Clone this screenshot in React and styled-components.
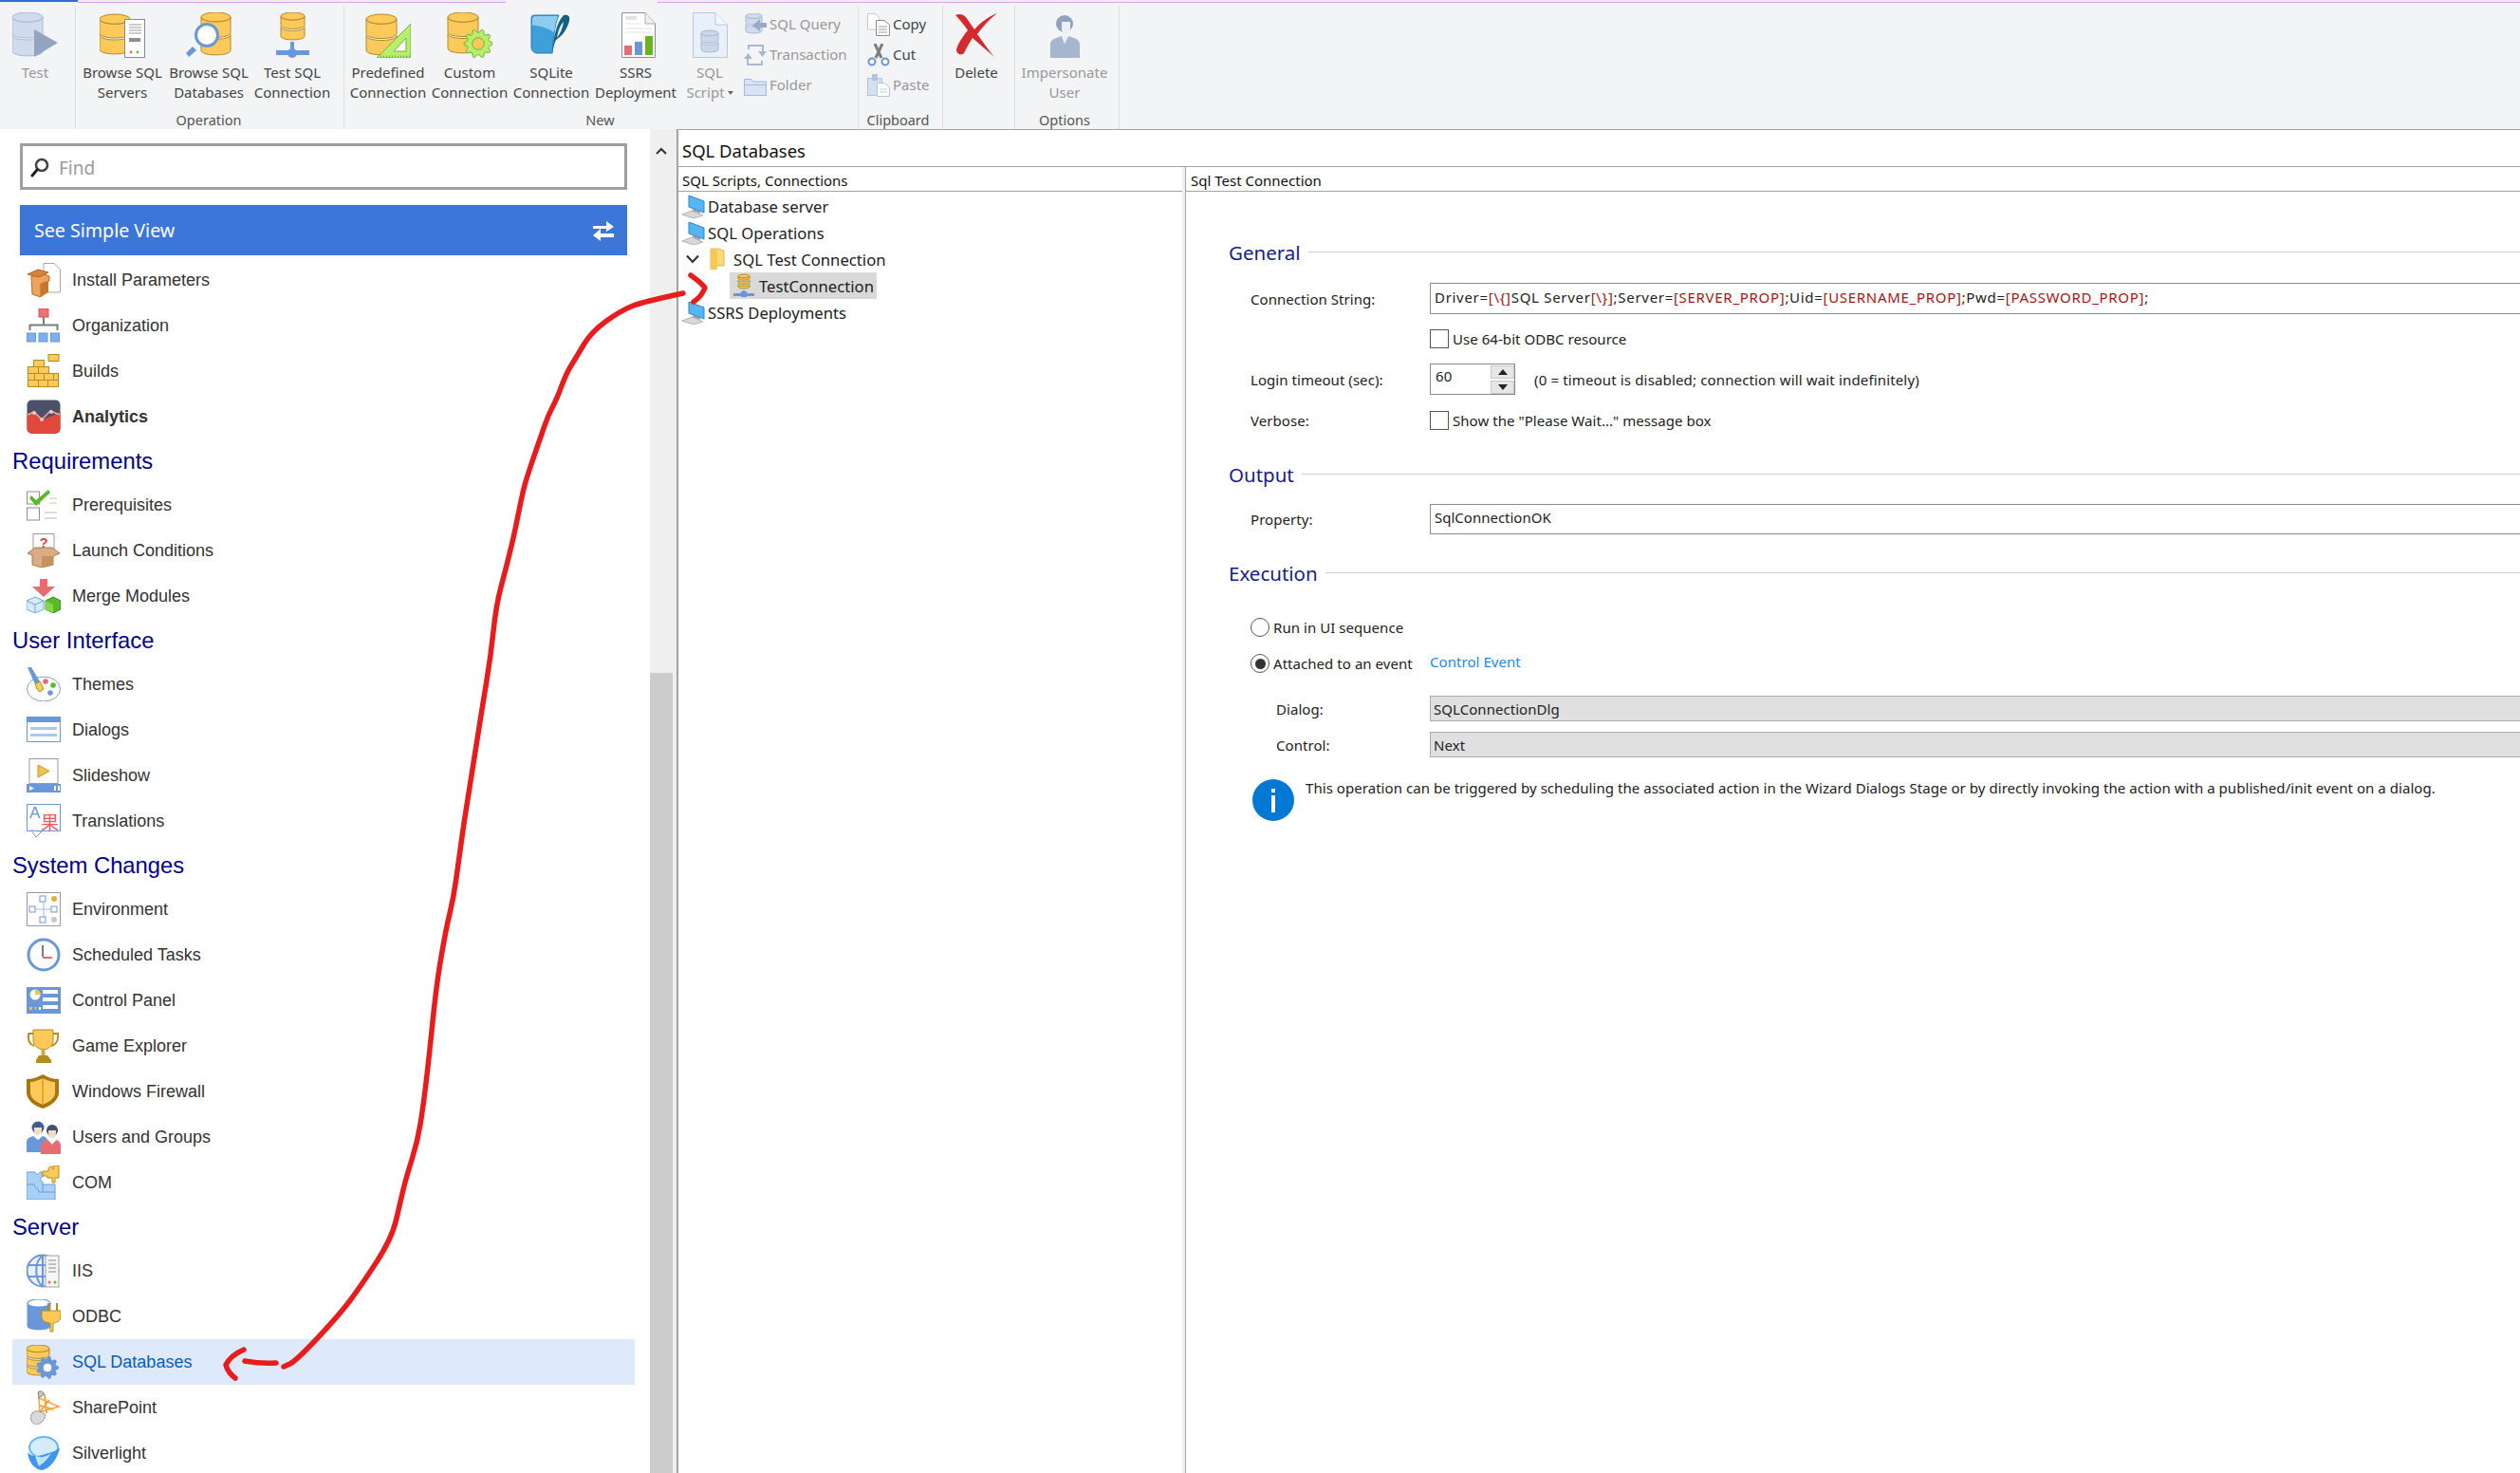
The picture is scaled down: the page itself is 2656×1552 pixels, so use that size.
import React from "react";
import styled, { createGlobalStyle } from "styled-components";

const UI_FONT = `"Noto Sans", "Open Sans", sans-serif`;
const NAV_FONT = `"Liberation Sans", Arial, sans-serif`;

const GOLD = "#fdc958";
const GOLD_LINE = "#b08a2c";
const PALE = "#d0dcee";
const PALE_LINE = "#a8b8d4";
const BLUE = "#6a97d8";

/* ------------------------------ drawing helpers ----------------------------- */

// two or three stacked drums, the database shape used all over the app
const Db = ({ x = 0, y = 0, w = 32, h = 44, fill = GOLD, line = GOLD_LINE, tiers = 2 }) => {
  const ry = w * 0.16;
  const step = (h - ry * 2) / tiers;
  const parts = [];
  for (let i = tiers - 1; i >= 0; i--) {
    const top = y + ry + i * step;
    parts.push(
      <path
        key={i}
        d={`M${x} ${top}v${step - 2}c0 ${ry * 1.3} ${w} ${ry * 1.3} ${w} 0v${-(step - 2)}c0 ${ry * 1.3} ${-w} ${ry * 1.3} ${-w} 0z`}
        fill={fill}
        stroke={line}
        strokeWidth="1"
      />
    );
  }
  return (
    <g>
      {parts}
      <ellipse cx={x + w / 2} cy={y + ry} rx={w / 2} ry={ry} fill={fill} stroke={line} strokeWidth="1" />
    </g>
  );
};

const gearPath = (cx, cy, r, teeth) => {
  const pts = [];
  const n = teeth * 4;
  for (let i = 0; i < n; i++) {
    const a = ((i - 0.5) / n) * Math.PI * 2;
    const rad = i % 4 < 2 ? r : r * 0.78;
    pts.push(`${(cx + Math.cos(a) * rad).toFixed(2)} ${(cy + Math.sin(a) * rad).toFixed(2)}`);
  }
  return `M${pts.join("L")}z`;
};

const Gear = ({ cx, cy, r, teeth = 9, fill, line, hole = "#fff" }) => (
  <g>
    <path d={gearPath(cx, cy, r, teeth)} fill={fill} stroke={line} strokeWidth="1" strokeLinejoin="round" />
    <circle cx={cx} cy={cy} r={r * 0.42} fill={hole} stroke={line} strokeWidth="1" />
  </g>
);

const smooth = (pts) => {
  let d = `M${pts[0][0]} ${pts[0][1]}`;
  for (let i = 1; i < pts.length - 1; i++) {
    const mx = (pts[i][0] + pts[i + 1][0]) / 2;
    const my = (pts[i][1] + pts[i + 1][1]) / 2;
    d += `Q${pts[i][0]} ${pts[i][1]} ${mx} ${my}`;
  }
  const last = pts[pts.length - 1];
  return `${d}L${last[0]} ${last[1]}`;
};

const Svg = ({ size = 36, children }) => (
  <svg width={size} height={size} viewBox={`0 0 ${size} ${size}`}>
    {children}
  </svg>
);

/* ------------------------------ ribbon icons ------------------------------ */

const ribbonIcons = {
  test: (
    <Svg size={48}>
      <Db w={32} h={48} fill={PALE} line={PALE_LINE} />
      <path d="M23 18L48 32 23 47z" fill="#93a4c1" />
    </Svg>
  ),
  servers: (
    <Svg size={48}>
      <Db y={2} w={32} h={44} />
      <rect x="26.5" y="7.5" width="21" height="40" fill="#fff" stroke="#8a8a8a" />
      <path d="M31 13h13M31 16h13M31 19h13M31 22h13" stroke="#9a9a9a" />
      <rect x="31" y="27" width="12" height="4" fill="#8f8f8f" />
      <circle cx="33" cy="42" r="1.4" fill="#e66" />
      <circle cx="40" cy="42" r="1.4" fill="#6b2" />
    </Svg>
  ),
  databases: (
    <Svg size={48}>
      <Db x={16} w={31} h={47} />
      <circle cx="22" cy="24" r="11.5" fill="#fff" stroke={BLUE} strokeWidth="3" />
      <path d="M3 47l-3-4 7-7 4 4z" fill={BLUE} />
    </Svg>
  ),
  testSql: (
    <Svg size={48}>
      <Db x={12} w={25} h={31} />
      <rect x="22" y="31" width="4" height="8" fill={BLUE} />
      <rect x="7" y="40" width="35" height="5" fill={BLUE} />
      <circle cx="24" cy="43" r="5" fill={BLUE} />
    </Svg>
  ),
  predefined: (
    <Svg size={48}>
      <Db x={1} y={2} w={32} h={45} />
      <path d="M48 12V48H12z" fill="#b7ee6c" stroke="#6fb33e" />
      <path d="M43 27V41H30z" fill="#fff" stroke="#6fb33e" />
      <path d="M16 46.5H47" stroke="#6fb33e" strokeWidth="2" strokeDasharray="1 2" />
    </Svg>
  ),
  custom: (
    <Svg size={48}>
      <Db x={1} w={32} h={45} />
      <Gear cx={33} cy={33} r={15} teeth={10} fill="#b7ee6c" line="#6fb33e" hole={GOLD} />
    </Svg>
  ),
  sqlite: (
    <Svg size={48}>
      <path d="M6 3H32C27 14 26 30 25 43H9a6 6 0 0 1-6-6V6a3 3 0 0 1 3-3z" fill="#3f9fd8" stroke="#1f7fb5" />
      <path d="M6 4H31C29 9 28 14 27 21 17 15 8 13 4 14V6z" fill="#8fcdf0" />
      <path d="M25 44C26 26 30 10 37 3c5-1 7 1 6 6-2 8-7 16-14 20-2 4-3 9-4 15z" fill="#15607f" />
      <path d="M30 27c1-7 3-13 7-17-1 6-3 12-7 17z" fill="#e8f2f7" />
    </Svg>
  ),
  ssrs: (
    <Svg size={48}>
      <path d="M9.5 .5H34L44.500 12V47.500H9.500z" fill="#fff" stroke="#8e8e8e" />
      <path d="M34 .5V12H44.500" fill="#f0f0f0" stroke="#b0b0b0" />
      <rect x="13" y="4" width="12" height="4" fill="#e4e4e4" />
      <path d="M13 12h15M13 17h28M13 21h28" stroke="#e2e2e2" />
      <rect x="12" y="35" width="8" height="10" fill="#e86d73" />
      <rect x="23" y="31" width="8" height="14" fill={BLUE} />
      <rect x="34" y="25" width="8" height="20" fill="#6bb120" />
    </Svg>
  ),
  script: (
    <Svg size={48}>
      <path d="M6.500 .5H30L42.500 13V47.500H6.500z" fill="#e9f0fb" stroke="#b8c8e2" />
      <path d="M30 .5V13H42.500" fill="#f4f7fc" stroke="#b8c8e2" />
      <Db x={15} y={19} w={18} h={25} fill="#ccd7e8" line="#a8b8d4" />
    </Svg>
  ),
  deleteX: (
    <Svg size={48}>
      <path d="M2 3C6 1 10 2 13 5 16 9 19 14 22 18 28 11 36 5 46 1 38 7 31 15 25 23 31 31 37 40 43 47 35 40 27 33 20 27 16 33 13 39 11 43 8 46 3 44 3 39 5 32 10 25 15 19 11 13 6 7 2 3z" fill="#d32a2e" />
    </Svg>
  ),
  user: (
    <Svg size={48}>
      <circle cx="24" cy="12" r="9" fill="#8ea3c4" />
      <path d="M21 10h9v7c0 4-3 7-5 7s-4-3-4-7z" fill="#eaf0f8" />
      <path d="M9 48V34c0-4 3-6 6-7l6-2 3 8 4-8 6 2c3 1 6 3 6 7v14z" fill="#a6b6d0" />
      <path d="M21 25l3 8 4-8z" fill="#eaf0f8" />
    </Svg>
  ),
};

const smallIcons = {
  query: (
    <Svg size={24}>
      <Db x={2} w={17} h={23} fill={PALE} line={PALE_LINE} />
      <path d="M24 10l-7 0 0-4-8 7 8 6 0-4 7 0z" fill="#97a9c6" />
    </Svg>
  ),
  transaction: (
    <Svg size={24}>
      <path d="M5 6V2H20V9M19 18V22H4V15" fill="none" stroke="#a8b8d4" strokeWidth="2" />
      <path d="M15 8H24L19.500 14z" fill="#a8b8d4" />
      <path d="M0 16H9L4.500 10z" fill="#a8b8d4" />
    </Svg>
  ),
  folder: (
    <Svg size={24}>
      <path d="M.5 5.500H8L10 8H23.500V22.500H.5z" fill="#d8e3f3" stroke="#a8b8d4" />
      <path d="M.5 11.500H23.500" stroke="#a8b8d4" />
    </Svg>
  ),
  copy: (
    <Svg size={24}>
      <path d="M.5 .5H9L13 5V17H.5z" fill="#fff" stroke="#c9c9c9" />
      <path d="M9.500 7.500H18L23.500 12V23.500H9.500z" fill="#fff" stroke="#8e8e8e" />
      <path d="M12 14h9M12 17h9M12 20h9" stroke="#9a9a9a" />
    </Svg>
  ),
  cut: (
    <Svg size={24}>
      <path d="M8 0l7 15M16 0L9 15" stroke="#7d7d7d" strokeWidth="3" fill="none" />
      <circle cx="5" cy="19" r="3.500" fill="#fff" stroke={BLUE} strokeWidth="2" />
      <circle cx="19" cy="19" r="3.500" fill="#fff" stroke={BLUE} strokeWidth="2" />
    </Svg>
  ),
  paste: (
    <Svg size={24}>
      <rect x=".5" y="4.500" width="15" height="18" fill="#d5e0f1" stroke="#b4c3dc" />
      <rect x="5" y="0" width="6" height="7" fill="#b4c3dc" />
      <path d="M10.500 9.500H18L23.500 14V23.500H10.500z" fill="#fff" stroke="#b4c3dc" />
      <path d="M13 16h8M13 19h8" stroke="#c4cfe0" />
    </Svg>
  ),
};

/* -------------------------------- nav icons ------------------------------- */

const navIcons = {
  install: (
    <Svg>
      <path d="M18 .5H29L35.500 7V31H18z" fill="#fff" stroke="#a8a8a8" />
      <path d="M5 14L16 11 24 14V19L15 22V36L6 33z" fill="#eda35a" stroke="#b3682b" />
      <path d="M1 12L12 7 23 10 13 15z" fill="#d8813a" stroke="#b3682b" />
      <path d="M15 22L23 19V31L15 36z" fill="#c9762f" />
    </Svg>
  ),
  organization: (
    <Svg>
      <rect x="13" y="0" width="10" height="9" fill="#ee7176" stroke="#c95458" />
      <path d="M18 9V17M3.500 23V17.500H32.500V23" fill="none" stroke="#7d7d7d" strokeWidth="2" />
      <rect x=".5" y="26" width="9" height="9" fill="#7cb0ec" stroke={BLUE} />
      <rect x="13" y="26" width="9" height="9" fill="#7cb0ec" stroke={BLUE} />
      <rect x="25.500" y="26" width="9" height="9" fill="#7cb0ec" stroke={BLUE} />
    </Svg>
  ),
  builds: (
    <Svg>
      <rect x="23" y=".5" width="11" height="7" fill={GOLD} stroke="#b58c1f" />
      {[
        [7, 6, 11], [1, 13, 11], [12, 13, 11],
        [1, 20, 7], [8, 20, 10], [18, 20, 10], [28, 20, 5],
        [1, 27, 11], [12, 27, 10], [22, 27, 11],
      ].map(([x, y, w]) => (
        <rect key={`${x}-${y}`} x={x + 0.5} y={y + 0.5} width={w} height="7" fill={GOLD} stroke="#b58c1f" />
      ))}
    </Svg>
  ),
  analytics: (
    <Svg>
      <rect x=".5" y=".5" width="35" height="35" rx="5" fill="#4a5068" />
      <path d="M.5 16L8 13 16 21 25 18 35.500 13V31a5 5 0 0 1-5 5H5.500a5 5 0 0 1-5-5z" fill="#e0483c" />
      <path d="M1 16L8 13 16 21 25 12 35 16" fill="none" stroke="#f3a39d" strokeWidth="1.500" />
      <circle cx="8" cy="14" r="2" fill="#f9c7c3" />
      <circle cx="16" cy="21" r="2" fill="#f9c7c3" />
      <circle cx="26" cy="13" r="2" fill="#f9c7c3" />
    </Svg>
  ),
  prerequisites: (
    <Svg>
      <rect x=".5" y="4" width="13" height="13" fill="#fff" stroke="#8e8e8e" />
      <rect x=".5" y="21" width="13" height="13" fill="#fff" stroke="#8e8e8e" />
      <path d="M5 8L10 13 23 2 25 5 10 19 3 11z" fill="#5cb82a" />
      <path d="M24 11h8M24 16h8" stroke="#b5d69a" />
      <path d="M19 26h13M19 32h13" stroke="#b9b9b9" />
    </Svg>
  ),
  launch: (
    <Svg>
      <rect x="7" y=".5" width="22" height="18" fill="#fff" stroke="#9a9a9a" />
      <text x="18" y="15" textAnchor="middle" fontFamily={NAV_FONT} fontWeight="700" fontSize="15" fill="#d9434a">?</text>
      <path d="M1 21L9 15H27L35 21 28 24V33L16 36 6 33V23z" fill="#d9ac83" stroke="#a67c52" />
      <path d="M16 24V36L28 33V24z" fill="#c2925f" />
    </Svg>
  ),
  merge: (
    <Svg>
      <path d="M14 0H22V8H30L18 19 6 8H14z" fill="#ea6a70" />
      <path d="M0 23L9 19 18 23V32L9 36 0 32z" fill="#d8ebfb" stroke="#6fa8e0" />
      <path d="M0 23L9 27 18 23M9 27V36" fill="none" stroke="#6fa8e0" />
      <path d="M20 23L28 19 36 23V32L28 36 20 32z" fill="#5cb82a" stroke="#3f8a17" />
      <path d="M20 23L28 27V36L20 32z" fill="#84d64b" />
    </Svg>
  ),
  themes: (
    <Svg>
      <ellipse cx="18" cy="23" rx="17.500" ry="13" fill="#fff" stroke="#8a9dbd" />
      <circle cx="20" cy="15" r="2.800" fill="#ea6a70" />
      <circle cx="28" cy="19" r="2.800" fill="#5cb82a" />
      <circle cx="25" cy="27" r="2.800" fill={BLUE} />
      <path d="M1 0L5 0 14 15 9 18z" fill={BLUE} />
      <path d="M9 18L14 15 18 23 14 26 11 23z" fill={GOLD} stroke={GOLD_LINE} />
    </Svg>
  ),
  dialogs: (
    <Svg>
      <rect x=".5" y="4.500" width="35" height="26" fill="#fff" stroke={BLUE} />
      <rect x="0" y="4" width="36" height="6" fill={BLUE} />
      <rect x="4" y="15" width="28" height="3" fill="#a6c8f1" />
      <rect x="4" y="22" width="28" height="3" fill="#a6c8f1" />
    </Svg>
  ),
  slideshow: (
    <Svg>
      <rect x="3" y=".5" width="30" height="26" fill="#fff" stroke="#9a9a9a" />
      <path d="M12 7L24 13.500 12 20z" fill="#f2c251" stroke="#c9912a" />
      <rect x="0" y="27" width="36" height="9" fill={BLUE} />
      <path d="M3 29L8 31.500 3 34zM29 29h2v5h-2zM33 29h2v5h-2z" fill="#fff" />
    </Svg>
  ),
  translations: (
    <Svg>
      <rect x=".5" y=".5" width="35" height="28" fill="#fff" stroke={BLUE} />
      <path d="M5 28L16 29 10 35z" fill="#fff" stroke={BLUE} />
      <text x="3" y="15" fontFamily={NAV_FONT} fontSize="17" fill={BLUE}>A</text>
      <text x="15" y="27" fontFamily={`"Noto Sans CJK SC", sans-serif`} fontSize="19" fill="#ea5b62">果</text>
    </Svg>
  ),
  environment: (
    <Svg>
      <rect x=".5" y=".5" width="35" height="35" fill="#fff" stroke="#9a9a9a" />
      <path d="M18 7V29M8 18H28" stroke="#9cbde8" fill="none" />
      <rect x="14" y="4" width="6" height="6" fill="#fff" stroke={BLUE} />
      <rect x="14" y="26" width="6" height="6" fill="#fff" stroke={BLUE} />
      <rect x="3" y="15" width="6" height="6" fill="#fff" stroke={BLUE} />
      <rect x="26" y="15" width="6" height="6" fill="#fff" stroke={BLUE} />
      <circle cx="29" cy="7" r="3" fill="#e8ae3c" />
      <circle cx="29" cy="29" r="3" fill="#c9c9c9" />
    </Svg>
  ),
  scheduled: (
    <Svg>
      <circle cx="18" cy="18" r="16" fill="#fff" stroke={BLUE} strokeWidth="3" />
      <path d="M17 8V20" stroke="#7d7d7d" strokeWidth="2" />
      <path d="M17 21H27" stroke="#ea6a70" strokeWidth="2" />
    </Svg>
  ),
  control: (
    <Svg>
      <rect x="0" y="4" width="36" height="28" fill={BLUE} />
      <circle cx="9" cy="12" r="5.500" fill="#fff" />
      <path d="M9 12V6.500a5.500 5.500 0 0 1 5.500 5.500z" fill="#f2c251" />
      <rect x="17" y="7" width="16" height="4" fill="#fff" />
      <rect x="17" y="15" width="16" height="4" fill="#fff" />
      <rect x="17" y="23" width="16" height="4" fill="#fff" />
      <path d="M3 25h3v3h-3z" fill="#f2c251" />
      <path d="M8 25h3v3h-3z" fill="#8fd05a" />
      <path d="M13 25h2v3h-2z" fill="#fff" />
    </Svg>
  ),
  trophy: (
    <Svg>
      <path d="M2 5H8M28 5H33V9C33 14 29 17 26 18M8 18C5 17 2 14 2 9V5" fill="none" stroke="#b58c1f" strokeWidth="2" />
      <path d="M7 1H28V12C28 18 23 21 18 22 12 21 7 18 7 12z" fill={GOLD} stroke="#b58c1f" />
      <rect x="15.500" y="22" width="4" height="6" fill="#d9a63a" />
      <path d="M10 36V33L13 28H22L26 33V36z" fill="#b58c1f" />
    </Svg>
  ),
  shield: (
    <Svg>
      <path d="M17 0C12 3 6 5 0 5V19C0 27 8 33 17 36 26 33 34 27 34 19V5C28 5 22 3 17 0z" fill="#a8760e" />
      <path d="M17 4C13 6 8 8 4 8V19C4 25 10 29 17 32 24 29 30 25 30 19V8C26 8 21 6 17 4z" fill={GOLD} />
      <path d="M17 4V32" stroke="#e0a92f" strokeWidth="2" />
    </Svg>
  ),
  users: (
    <Svg>
      <circle cx="12" cy="8" r="6.500" fill="#3f5f8f" />
      <path d="M8 8h8v3c0 3-2 5-4 5s-4-2-4-5z" fill="#f3ddc8" />
      <path d="M0 34V23c0-3 3-5 7-6l5 4 5-4c3 1 5 2 5 5v12z" fill={BLUE} />
      <circle cx="27" cy="11" r="6" fill="#40506d" />
      <path d="M23 11h8v3c0 3-2 5-4 5s-4-2-4-5z" fill="#f3ddc8" />
      <path d="M15 36V28c0-4 3-6 7-7l5 4 5-4c2 1 4 3 4 6v9z" fill="#e86d73" />
      <path d="M24 22l3 4 3-4z" fill="#fff" />
    </Svg>
  ),
  com: (
    <Svg>
      <path d="M0 7H9C9 10 14 10 14 7H17V12C14 12 14 17 17 17V20H30V36H0z" fill="#a9d0f5" stroke={BLUE} />
      <path d="M0 20H8M17 20V28M8 20C8 24 13 24 13 28H30" fill="none" stroke={BLUE} />
      <path d="M17 6H23V4C23 0 28 0 28 4V0H34V13H30V18H27V13H22V11H17z" fill={GOLD} stroke="#b58c1f" />
    </Svg>
  ),
  iis: (
    <Svg>
      <circle cx="17" cy="18" r="16.500" fill="#e8f0fb" stroke={BLUE} strokeWidth="2" />
      <path d="M17 2C8 8 8 28 17 34M1 12H24M1 24H24M17 2V34" fill="none" stroke={BLUE} strokeWidth="2" />
      <rect x="20" y="2" width="14" height="33" fill="#f5f5f5" stroke="#a2a2a2" />
      <path d="M23 7h8M23 11h8M23 15h8M23 19h8" stroke="#8a8a8a" />
      <circle cx="24" cy="30" r="1.500" fill="#e66" />
      <circle cx="30" cy="30" r="1.500" fill="#6b2" />
    </Svg>
  ),
  odbc: (
    <Svg>
      <Db x={1} w={24} h={34} fill={BLUE} line={BLUE} tiers={1} />
      <ellipse cx="13" cy="4" rx="12" ry="4" fill="#fff" stroke={BLUE} />
      <path d="M22 4h2v9h-2zM31 4h2v9h-2z" fill="#b58c1f" />
      <path d="M16 12H36V18C36 23 31 25 28 25V34H25V25C21 25 16 23 16 18z" fill={GOLD} stroke="#b58c1f" />
    </Svg>
  ),
  sqlDb: (
    <Svg>
      <Db x={0} y={0} w={24} h={34} tiers={3} />
      <Gear cx={22} cy={24} r={11.500} teeth={9} fill={BLUE} line={BLUE} hole="#fff" />
    </Svg>
  ),
  sharepoint: (
    <Svg>
      <path d="M13 8L34 17 14 23z" fill="#fff" stroke="#f0a642" strokeWidth="1.500" />
      <path d="M19 4L21 24M14 16L28 20M24 10L14 23" stroke="#f0a642" strokeWidth="2" />
      <path d="M12 2C15 0 18 1 18 4L13 8z" fill="#c9c9c9" stroke="#777" />
      <path d="M6 24C10 20 16 22 20 26 19 32 14 36 9 36 4 33 3 28 6 24z" fill="#d9d9d9" stroke="#777" strokeDasharray="2 1" />
    </Svg>
  ),
  silverlight: (
    <Svg>
      <ellipse cx="18" cy="12" rx="15" ry="11" fill="#d4ecfb" stroke="#6cb4ec" strokeWidth="2" />
      <path d="M1 17C6 23 14 21 20 19 26 17 32 16 35 12 33 24 24 36 15 36 7 34 2 26 1 17z" fill="#3f96e8" />
      <path d="M9 20C15 24 20 22 26 18 21 27 15 30 13 32 11 28 10 24 9 20z" fill="#bfe4fb" />
    </Svg>
  ),
};

const TreePc = () => (
  <svg width="24" height="26" viewBox="0 0 24 26">
    <path d="M7 2L23 8V20L7 14z" fill="#55b6f3" stroke="#2a86c8" />
    <path d="M11 16L19 19V21L11 18z" fill="#9a9a9a" />
    <path d="M0 22L10 18 22 23 12 26z" fill="#d5d8dc" stroke="#b0b4b8" />
  </svg>
);

const TreeFolder = () => (
  <svg width="16" height="26" viewBox="0 0 16 26">
    <path d="M1 2H9L15 4V20H8L1 24z" fill="#fbd978" stroke="#e0b94a" />
    <path d="M1 2L8 4V24L1 24z" fill="#f5c955" />
  </svg>
);

const TreeConn = () => (
  <svg width="22" height="26" viewBox="0 0 22 26">
    <Db x={5} y={1} w={12} h={17} tiers={3} />
    <rect x="10" y="18" width="2" height="4" fill={BLUE} />
    <rect x="0" y="21" width="22" height="3" fill={BLUE} />
    <rect x="8" y="19" width="6" height="6" fill={BLUE} />
  </svg>
);

/* ---------------------------------- data ---------------------------------- */

const navSections = [
  {
    items: [
      ["install", "Install Parameters"],
      ["organization", "Organization"],
      ["builds", "Builds"],
      ["analytics", "Analytics", "bold"],
    ],
  },
  {
    title: "Requirements",
    items: [
      ["prerequisites", "Prerequisites"],
      ["launch", "Launch Conditions"],
      ["merge", "Merge Modules"],
    ],
  },
  {
    title: "User Interface",
    items: [
      ["themes", "Themes"],
      ["dialogs", "Dialogs"],
      ["slideshow", "Slideshow"],
      ["translations", "Translations"],
    ],
  },
  {
    title: "System Changes",
    items: [
      ["environment", "Environment"],
      ["scheduled", "Scheduled Tasks"],
      ["control", "Control Panel"],
      ["trophy", "Game Explorer"],
      ["shield", "Windows Firewall"],
      ["users", "Users and Groups"],
      ["com", "COM"],
    ],
  },
  {
    title: "Server",
    items: [
      ["iis", "IIS"],
      ["odbc", "ODBC"],
      ["sqlDb", "SQL Databases", "active"],
      ["sharepoint", "SharePoint"],
      ["silverlight", "Silverlight"],
    ],
  },
];

const arrowLine = [
  [720, 309], [677, 318], [653, 328], [623, 350], [607, 377], [597, 393], [587, 420], [578, 437],
  [570, 460], [562, 483], [553, 510], [548, 533], [542, 563], [533, 600], [523, 637], [517, 693],
  [508, 747], [497, 817], [489, 867], [483, 910], [478, 946], [470, 979], [460, 1037], [452, 1116],
  [446, 1166], [440, 1203], [428, 1241], [422, 1266], [413, 1305], [379, 1357], [357, 1386],
  [312, 1434], [299, 1440],
];

/* ---------------------------- main component ---------------------------- */

const RibbonButton = ({ w, icon, lines, off, caret }) => (
  <BigButton $w={w} $off={off}>
    <BigIcon>{ribbonIcons[icon]}</BigIcon>
    {lines.map((l, i) => (
      <BigLabel key={l}>
        {l}
        {caret && i === lines.length - 1 && <Caret />}
      </BigLabel>
    ))}
  </BigButton>
);

const SmallColumn = ({ left, items }) => (
  <SmallCol $left={left}>
    {items.map(([icon, label, off]) => (
      <SmallButton key={label} $off={off}>
        {smallIcons[icon]}
        <span>{label}</span>
      </SmallButton>
    ))}
  </SmallCol>
);

const App = () => {
  return (
    <Page>
      <GlobalStyle />
      <TabStrip>
        <TabActive />
        <TabPink $w={451} />
        <TabGap />
        <TabPink />
      </TabStrip>

      <Ribbon>
        <Group $w={80}>
          <Buttons>
            <RibbonButton w={74} icon="test" lines={["Test"]} off />
          </Buttons>
          <GroupLabel />
        </Group>
        <Group $w={283} $pad={3}>
          <Buttons>
            <RibbonButton w={92} icon="servers" lines={["Browse SQL", "Servers"]} />
            <RibbonButton w={90} icon="databases" lines={["Browse SQL", "Databases"]} />
            <RibbonButton w={86} icon="testSql" lines={["Test SQL", "Connection"]} />
          </Buttons>
          <GroupLabel>Operation</GroupLabel>
        </Group>
        <Group $w={542} $pad={3}>
          <Buttons>
            <RibbonButton w={86} icon="predefined" lines={["Predefined", "Connection"]} />
            <RibbonButton w={86} icon="custom" lines={["Custom", "Connection"]} />
            <RibbonButton w={86} icon="sqlite" lines={["SQLite", "Connection"]} />
            <RibbonButton w={92} icon="ssrs" lines={["SSRS", "Deployment"]} />
            <RibbonButton w={64} icon="script" lines={["SQL", "Script"]} off caret />
            <SmallColumn
              left={4}
              items={[
                ["query", "SQL Query", true],
                ["transaction", "Transaction", true],
                ["folder", "Folder", true],
              ]}
            />
          </Buttons>
          <GroupLabel>New</GroupLabel>
        </Group>
        <Group $w={89}>
          <Buttons>
            <SmallColumn
              left={9}
              items={[
                ["copy", "Copy"],
                ["cut", "Cut"],
                ["paste", "Paste", true],
              ]}
            />
          </Buttons>
          <GroupLabel>Clipboard</GroupLabel>
        </Group>
        <Group $w={76}>
          <Buttons>
            <RibbonButton w={70} icon="deleteX" lines={["Delete"]} />
          </Buttons>
          <GroupLabel />
        </Group>
        <Group $w={110}>
          <Buttons>
            <RibbonButton w={104} icon="user" lines={["Impersonate", "User"]} off />
          </Buttons>
          <GroupLabel>Options</GroupLabel>
        </Group>
      </Ribbon>

      <Body>
        <Sidebar>
          <FindBox>
            <svg width="20" height="22" viewBox="0 0 20 22">
              <circle cx="12" cy="9" r="6" fill="#fff" stroke="#444" strokeWidth="2.500" />
              <path d="M7 14L2 20" stroke="#222" strokeWidth="3" strokeLinecap="round" />
            </svg>
            <FindText>Find</FindText>
          </FindBox>
          <SimpleView>
            <span>See Simple View</span>
            <svg width="24" height="24" viewBox="0 0 24 24" fill="#fff">
              <path d="M1 7H15V2L23 8 15 13V10H1z" />
              <path d="M23 15H9V10L1 17 9 23V19H23z" />
            </svg>
          </SimpleView>
          {navSections.map((section) => (
            <div key={section.title || "top"}>
              {section.title && <NavHeading>{section.title}</NavHeading>}
              {section.items.map(([icon, label, mode]) => (
                <NavRow key={label} $active={mode === "active"} $bold={mode === "bold"}>
                  {navIcons[icon]}
                  <span>{label}</span>
                </NavRow>
              ))}
            </div>
          ))}
        </Sidebar>

        <ScrollTrack>
          <ScrollUp>
            <svg width="12" height="8" viewBox="0 0 12 8">
              <path d="M1 7L6 2 11 7" fill="none" stroke="#333" strokeWidth="2" />
            </svg>
          </ScrollUp>
          <ScrollThumb />
        </ScrollTrack>

        <Panel>
          <PanelTitle>SQL Databases</PanelTitle>
          <Panes>
            <TreePane>
              <PaneHeader>SQL Scripts, Connections</PaneHeader>
              <Tree>
                <TreeRow>
                  <TreePc />
                  <TreeText>Database server</TreeText>
                </TreeRow>
                <TreeRow>
                  <TreePc />
                  <TreeText>SQL Operations</TreeText>
                </TreeRow>
                <TreeRow $left={8}>
                  <svg width="14" height="10" viewBox="0 0 14 10">
                    <path d="M1 1.500L7 8 13 1.500" fill="none" stroke="#333" strokeWidth="2.200" />
                  </svg>
                  <FolderSlot>
                    <TreeFolder />
                  </FolderSlot>
                  <TreeText $left={9}>SQL Test Connection</TreeText>
                </TreeRow>
                <TreeRow $left={54}>
                  <SelectedNode>
                    <TreeConn />
                    <TreeText $left={5}>TestConnection</TreeText>
                  </SelectedNode>
                </TreeRow>
                <TreeRow>
                  <TreePc />
                  <TreeText>SSRS Deployments</TreeText>
                </TreeRow>
              </Tree>
            </TreePane>
            <Splitter />
            <FormPane>
              <PaneHeader $left={5}>Sql Test Connection</PaneHeader>
              <Form>
                <SectionTitle $top={49}>General</SectionTitle>
                <Row $top={17} $h={33}>
                  <FieldLabel>Connection String:</FieldLabel>
                  <TextField $wide>
                    Driver=<Prop>[\{"{"}]</Prop>SQL Server<Prop>[\{"}"}]</Prop>;Server=
                    <Prop>[SERVER_PROP]</Prop>;Uid=<Prop>[USERNAME_PROP]</Prop>;Pwd=
                    <Prop>[PASSWORD_PROP]</Prop>;
                  </TextField>
                </Row>
                <Row $top={16} $h={20}>
                  <FieldLabel />
                  <Check />
                  <CheckText>Use 64-bit ODBC resource</CheckText>
                </Row>
                <Row $top={16} $h={33}>
                  <FieldLabel>Login timeout (sec):</FieldLabel>
                  <SpinBox>
                    <SpinValue>60</SpinValue>
                    <SpinButtons>
                      <SpinButton>
                        <Tri $up />
                      </SpinButton>
                      <SpinButton>
                        <Tri />
                      </SpinButton>
                    </SpinButtons>
                  </SpinBox>
                  <Hint>(0 = timeout is disabled; connection will wait indefinitely)</Hint>
                </Row>
                <Row $top={17} $h={20}>
                  <FieldLabel>Verbose:</FieldLabel>
                  <Check />
                  <CheckText>Show the "Please Wait..." message box</CheckText>
                </Row>

                <SectionTitle $top={32}>Output</SectionTitle>
                <Row $top={16} $h={32}>
                  <FieldLabel>Property:</FieldLabel>
                  <TextField>SqlConnectionOK</TextField>
                </Row>

                <SectionTitle $top={26}>Execution</SectionTitle>
                <Row $top={32} $h={20}>
                  <Radio />
                  <RadioText>Run in UI sequence</RadioText>
                </Row>
                <Row $top={18} $h={20}>
                  <Radio $on />
                  <RadioText>Attached to an event</RadioText>
                  <EventLink>Control Event</EventLink>
                </Row>
                <Row $top={24} $h={27}>
                  <SubLabel>Dialog:</SubLabel>
                  <ReadOnlyField>SQLConnectionDlg</ReadOnlyField>
                </Row>
                <Row $top={11} $h={27}>
                  <SubLabel>Control:</SubLabel>
                  <ReadOnlyField>Next</ReadOnlyField>
                </Row>
                <InfoRow>
                  <svg width="44" height="44" viewBox="0 0 44 44">
                    <circle cx="22" cy="22" r="22" fill="#0078d4" />
                    <rect x="20" y="10" width="4" height="4" fill="#fff" />
                    <rect x="20" y="17" width="4" height="18" fill="#fff" />
                  </svg>
                  <InfoText>
                    This operation can be triggered by scheduling the associated action in the Wizard
                    Dialogs Stage or by directly invoking the action with a published/init event on a
                    dialog.
                  </InfoText>
                </InfoRow>
              </Form>
            </FormPane>
          </Panes>
        </Panel>
      </Body>

      {/* red pen annotation drawn on top of the screenshot */}
      <Annotation viewBox="0 0 2656 1552">
        <g fill="none" stroke="#e81c1c" strokeWidth="5.500" strokeLinecap="round" strokeLinejoin="round">
          <path d={smooth(arrowLine)} />
          <path d="M728 290Q738 297 743 303 740 312 731 318" />
          <path d="M257 1422Q243 1428 238 1438 240 1446 248 1452" />
          <path d="M258 1434Q275 1437 291 1436" />
        </g>
      </Annotation>
    </Page>
  );
};

export default App;

/* ---------------------------- styled components --------------------------- */

const GlobalStyle = createGlobalStyle`
  html, body {
    margin: 0;
    padding: 0;
    background: #fff;
  }
`;

const Page = styled.div`
  position: relative;
  width: 2656px;
  height: 1552px;
  overflow: hidden;
  display: flex;
  flex-direction: column;
  font-family: ${UI_FONT};
  color: #222;
`;

const TabStrip = styled.div`
  display: flex;
  height: 3px;
  flex: none;
  background: #eeeff1;
`;

const TabActive = styled.div`
  width: 82px;
  height: 2px;
  background: #2b6fd0;
`;

const TabPink = styled.div`
  flex: ${(p) => (p.$w ? `0 0 ${p.$w}px` : "1")};
  border-bottom: 1px solid #df9bf5;
`;

const TabGap = styled.div`
  width: 160px;
  background: #f3f4f6;
`;

const Ribbon = styled.div`
  display: flex;
  flex: none;
  height: 133px;
  padding-top: 3px;
  box-sizing: border-box;
  background: #f3f4f6;
`;

const Group = styled.div`
  flex: 0 0 ${(p) => p.$w}px;
  box-sizing: border-box;
  display: flex;
  flex-direction: column;
  padding-left: ${(p) => p.$pad || 0}px;
  border-right: 1px solid #dcdee0;
`;

const Buttons = styled.div`
  display: flex;
  height: 111px;
  padding-top: 7px;
  box-sizing: border-box;
`;

const GroupLabel = styled.div`
  height: 19px;
  line-height: 19px;
  padding-right: 5px;
  text-align: center;
  font-size: 14.5px;
  color: #555;
`;

const BigButton = styled.div`
  flex: 0 0 ${(p) => p.$w}px;
  display: flex;
  flex-direction: column;
  align-items: center;
  color: ${(p) => (p.$off ? "#989898" : "#444")};
`;

const BigIcon = styled.div`
  width: 48px;
  height: 48px;
  margin-bottom: 5px;
`;

const BigLabel = styled.div`
  line-height: 21px;
  font-size: 15px;
  white-space: nowrap;
`;

const Caret = styled.i`
  display: inline-block;
  margin-left: 3px;
  vertical-align: 3px;
  border: 3.5px solid transparent;
  border-top: 4px solid #666;
  border-bottom: 0;
`;

const SmallCol = styled.div`
  display: flex;
  flex-direction: column;
  margin: -3px 0 0 ${(p) => p.$left}px;
`;

const SmallButton = styled.div`
  height: 32px;
  display: flex;
  align-items: center;
  gap: 3px;
  font-size: 15px;
  white-space: nowrap;
  color: ${(p) => (p.$off ? "#989898" : "#444")};

  span {
    margin-top: -2px;
  }
`;

const Body = styled.div`
  flex: 1;
  min-height: 0;
  display: flex;
`;

const Sidebar = styled.div`
  flex: 0 0 685px;
  box-sizing: border-box;
  padding: 15px 16px 0 13px;
  overflow: hidden;
  font-family: ${NAV_FONT};
`;

const FindBox = styled.div`
  box-sizing: border-box;
  height: 49px;
  margin-left: 8px;
  width: 640px;
  border: 3px solid #9e9e9e;
  display: flex;
  align-items: center;
  padding-left: 8px;
  gap: 10px;
`;

const FindText = styled.span`
  margin-top: 3px;
  font-family: ${UI_FONT};
  font-size: 19px;
  color: #9a9a9a;
`;

const SimpleView = styled.div`
  box-sizing: border-box;
  height: 53px;
  margin: 16px 0 2px 8px;
  width: 640px;
  background: #3b76d8;
  color: #fff;
  font-family: ${UI_FONT};
  font-size: 19.6px;
  display: flex;
  align-items: center;
  justify-content: space-between;
  padding: 0 13px 0 15px;
`;

const NavHeading = styled.div`
  height: 45px;
  line-height: 46px;
  font-size: 23.8px;
  color: #00008b;
`;

const NavRow = styled.div`
  height: 48px;
  display: flex;
  align-items: center;
  gap: 12px;
  padding-left: 15px;
  font-size: 18px;
  background: ${(p) => (p.$active ? "#deeafc" : "transparent")};
  color: ${(p) => (p.$active ? "#0b5cb5" : "#333")};
  font-weight: ${(p) => (p.$bold ? 700 : 400)};
`;

const ScrollTrack = styled.div`
  flex: 0 0 28px;
  background: #efefef;
  position: relative;
  display: flex;
  flex-direction: column;
`;

const ScrollUp = styled.div`
  height: 573px;
  padding: 10px 0 0 6px;
  box-sizing: border-box;
`;

const ScrollThumb = styled.div`
  width: 24px;
  flex: 1;
  background: #cccccc;
`;

const Panel = styled.div`
  flex: 1;
  min-width: 0;
  display: flex;
  flex-direction: column;
  border-left: 2px solid #a4a4a4;
  border-top: 1px solid #a4a4a4;
`;

const PanelTitle = styled.div`
  height: 38px;
  line-height: 43px;
  padding-left: 4px;
  font-size: 18.5px;
  color: #111;
  border-bottom: 1px solid #a4a4a4;
`;

const Panes = styled.div`
  flex: 1;
  min-height: 0;
  display: flex;
`;

const TreePane = styled.div`
  flex: 0 0 531px;
`;

const Splitter = styled.div`
  flex: 0 0 3px;
  background: #efefef;
`;

const FormPane = styled.div`
  flex: 1;
  min-width: 0;
  overflow: hidden;
  border-left: 1px solid #a4a4a4;
`;

const PaneHeader = styled.div`
  box-sizing: border-box;
  height: 26px;
  line-height: 28px;
  padding-left: ${(p) => p.$left || 4}px;
  font-size: 15px;
  border-bottom: 1.5px solid #a4a4a4;
  color: #111;
`;

const Tree = styled.div`
  padding-top: 1px;
`;

const TreeRow = styled.div`
  height: 28px;
  display: flex;
  align-items: center;
  padding-left: ${(p) => p.$left || 4}px;
`;

const TreeText = styled.span`
  margin-left: ${(p) => p.$left || 3}px;
  font-size: 16.7px;
  color: #222;
  white-space: nowrap;
`;

const FolderSlot = styled.span`
  margin-left: 11px;
  display: flex;
`;

const SelectedNode = styled.div`
  height: 28px;
  width: 155px;
  box-sizing: border-box;
  background: #d9d9d9;
  display: flex;
  align-items: center;
  padding-left: 4px;
`;

const Form = styled.div`
  padding-left: 45px;
`;

const SectionTitle = styled.div`
  height: 30px;
  margin-top: ${(p) => p.$top}px;
  display: flex;
  align-items: center;
  gap: 4px;
  font-size: 20.5px;
  color: #1a1a8c;

  &::after {
    content: "";
    flex: 1;
    height: 1px;
    margin: -1px 0 0 4px;
    background: #d0d0d0;
  }
`;

const Row = styled.div`
  display: flex;
  align-items: center;
  height: ${(p) => p.$h}px;
  margin-top: ${(p) => p.$top}px;
  padding-left: 23px;
  font-size: 15px;
  letter-spacing: 0.05px;
  white-space: nowrap;
`;

const FieldLabel = styled.div`
  flex: 0 0 189px;
`;

const SubLabel = styled.div`
  flex: 0 0 162px;
  margin-left: 27px;
`;

const TextField = styled.div`
  flex: 1;
  align-self: stretch;
  box-sizing: border-box;
  margin-right: -6px;
  border: 1.5px solid #8a8a8a;
  padding: ${(p) => (p.$wide ? "4px" : "3px")} 0 0 4px;
  white-space: pre-wrap;
  letter-spacing: ${(p) => (p.$wide ? "0.7px" : "0")};
`;

const Prop = styled.span`
  color: #a31515;
`;

const ReadOnlyField = styled.div`
  flex: 1;
  align-self: stretch;
  box-sizing: border-box;
  margin-right: -6px;
  border: 1.5px solid #adadad;
  background: #e0e0e0;
  padding-left: 3px;
  display: flex;
  align-items: center;
`;

const Check = styled.div`
  box-sizing: border-box;
  width: 20px;
  height: 20px;
  border: 1.5px solid #555;
`;

const CheckText = styled.span`
  margin-left: 4px;
`;

const SpinBox = styled.div`
  box-sizing: border-box;
  width: 90px;
  align-self: stretch;
  border: 1.5px solid #8a8a8a;
  display: flex;
  justify-content: space-between;
`;

const SpinValue = styled.span`
  padding: 2px 0 0 5px;
`;

const SpinButtons = styled.div`
  width: 25px;
  display: flex;
  flex-direction: column;
  gap: 2px;
  margin-top: 1px;
`;

const SpinButton = styled.div`
  flex: 1;
  background: #e6e6e6;
  border: 1px solid #c8c8c8;
  display: flex;
  align-items: center;
  justify-content: center;
`;

const Tri = styled.i`
  border-left: 5px solid transparent;
  border-right: 5px solid transparent;
  ${(p) => (p.$up ? "border-bottom: 6px solid #222;" : "border-top: 6px solid #222;")}
`;

const Hint = styled.span`
  margin-left: 20px;
  letter-spacing: 0.15px;
`;

const Radio = styled.div`
  box-sizing: border-box;
  width: 20px;
  height: 20px;
  border-radius: 50%;
  border: 1.5px solid #555;
  display: flex;
  align-items: center;
  justify-content: center;

  &::after {
    content: "";
    width: 11px;
    height: 11px;
    border-radius: 50%;
    background: ${(p) => (p.$on ? "#333" : "transparent")};
  }
`;

const RadioText = styled.span`
  margin-left: 4px;
  min-width: 165px;
`;

const EventLink = styled.span`
  margin-top: -4px;
  color: #1e88e5;
`;

const InfoRow = styled.div`
  display: flex;
  margin: 23px 0 0 25px;
  gap: 12px;
`;

const InfoText = styled.div`
  font-size: 15px;
  letter-spacing: 0.05px;
  white-space: nowrap;
  line-height: 18px;
`;

const Annotation = styled.svg`
  position: absolute;
  left: 0;
  top: 0;
  width: 2656px;
  height: 1552px;
  pointer-events: none;
`;
